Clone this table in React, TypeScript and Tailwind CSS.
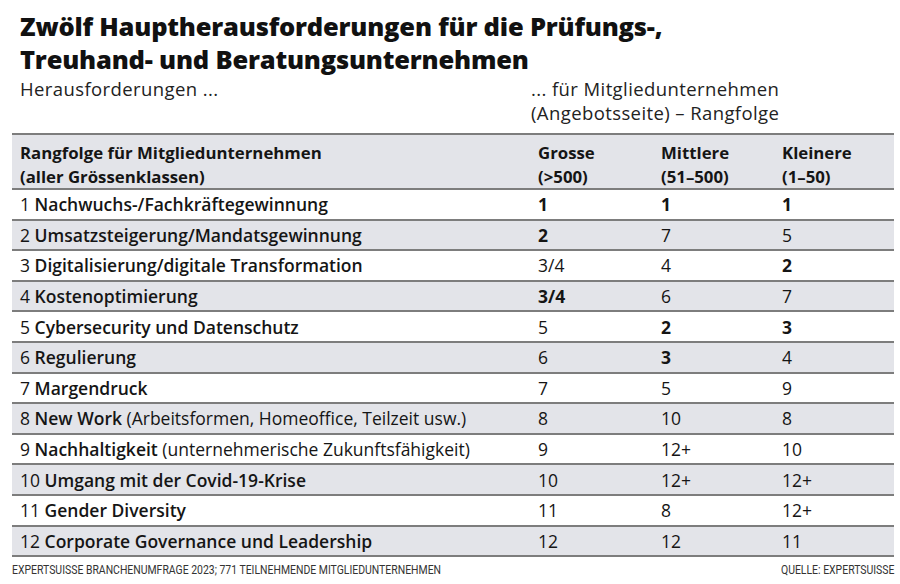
import React from "react"

type Cell = { v: string; b?: boolean }
type Row = { n: number; label: string; note?: string; cells: Cell[] }

const rows: Row[] = [
  { n: 1, label: "Nachwuchs-/Fachkräftegewinnung", cells: [{ v: "1", b: true }, { v: "1", b: true }, { v: "1", b: true }] },
  { n: 2, label: "Umsatzsteigerung/Mandatsgewinnung", cells: [{ v: "2", b: true }, { v: "7" }, { v: "5" }] },
  { n: 3, label: "Digitalisierung/digitale Transformation", cells: [{ v: "3/4" }, { v: "4" }, { v: "2", b: true }] },
  { n: 4, label: "Kostenoptimierung", cells: [{ v: "3/4", b: true }, { v: "6" }, { v: "7" }] },
  { n: 5, label: "Cybersecurity und Datenschutz", cells: [{ v: "5" }, { v: "2", b: true }, { v: "3", b: true }] },
  { n: 6, label: "Regulierung", cells: [{ v: "6" }, { v: "3", b: true }, { v: "4" }] },
  { n: 7, label: "Margendruck", cells: [{ v: "7" }, { v: "5" }, { v: "9" }] },
  { n: 8, label: "New Work", note: "(Arbeitsformen, Homeoffice, Teilzeit usw.)", cells: [{ v: "8" }, { v: "10" }, { v: "8" }] },
  { n: 9, label: "Nachhaltigkeit", note: "(unternehmerische Zukunftsfähigkeit)", cells: [{ v: "9" }, { v: "12+" }, { v: "10" }] },
  { n: 10, label: "Umgang mit der Covid-19-Krise", cells: [{ v: "10" }, { v: "12+" }, { v: "12+" }] },
  { n: 11, label: "Gender Diversity", cells: [{ v: "11" }, { v: "8" }, { v: "12+" }] },
  { n: 12, label: "Corporate Governance und Leadership", cells: [{ v: "12" }, { v: "12" }, { v: "11" }] },
]

const cols = "grid grid-cols-[526px_123px_121px_1fr]"

export default function App() {
  return (
    <div className="w-[900px] h-[584px] bg-white text-[#151515] font-['Open_Sans',sans-serif] overflow-hidden">
      <div className="pl-[20px] pt-[10px]">
        <h1 className="text-[25.5px] leading-[33px] font-extrabold tracking-[-0.2px] text-[#111]">
          Zwölf Hauptherausforderungen für die Prüfungs-,
          <br />
          Treuhand- und Beratungsunternehmen
        </h1>
      </div>
      <div className="flex text-[18.5px] leading-[24px] tracking-[0.4px] text-[#222] mt-[1px]">
        <div className="w-[531px] pl-[20px]">Herausforderungen ...</div>
        <div>
          ... für Mitgliedunternehmen
          <br />
          (Angebotsseite) – Rangfolge
        </div>
      </div>

      <div className="mx-[12px] mt-[8px] w-[882px]">
        <div className={`${cols} h-[57px] bg-[#e3e4e9] border-y-2 border-[#7d7d7d] pt-[6px] text-[16.8px] leading-[24px] font-bold`}>
          <div className="pl-[8px]">
            Rangfolge für Mitgliedunternehmen
            <br />
            (aller Grössenklassen)
          </div>
          <div>
            Grosse
            <br />
            (&gt;500)
          </div>
          <div>
            Mittlere
            <br />
            (51–500)
          </div>
          <div>
            Kleinere
            <br />
            (1–50)
          </div>
        </div>
        {rows.map((r) => (
          <div
            key={r.n}
            className={`${cols} h-[30.6px] items-center border-b-2 border-[#7d7d7d] text-[17.5px] leading-[24px] ${
              r.n % 2 === 0 ? "bg-[#e3e4e9]" : "bg-white"
            }`}
          >
            <div className="pl-[8px] whitespace-nowrap">
              {r.n} <span className="font-semibold">{r.label}</span>
              {r.note && <span> {r.note}</span>}
            </div>
            {r.cells.map((c, i) => (
              <div key={i} className={c.b ? "font-bold" : ""}>
                {c.v}
              </div>
            ))}
          </div>
        ))}
        <div className="flex justify-between mt-[5px] text-[12px] leading-[16px] text-[#333] font-['Roboto',sans-serif] uppercase">
          <span className="origin-left scale-x-[0.87] inline-block whitespace-nowrap">
            Expertsuisse Branchenumfrage 2023; 771 Teilnehmende Mitgliedunternehmen
          </span>
          <span className="origin-right scale-x-[0.87] inline-block whitespace-nowrap">Quelle: Expertsuisse</span>
        </div>
      </div>
    </div>
  )
}
